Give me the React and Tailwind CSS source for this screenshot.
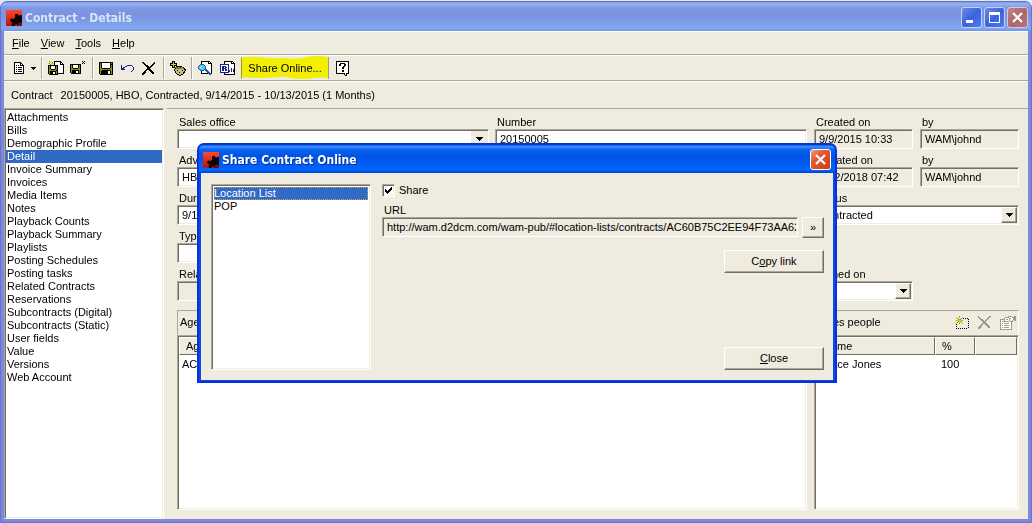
import { useState } from "react";

const sections = [
  "Attachments",
  "Bills",
  "Demographic Profile",
  "Detail",
  "Invoice Summary",
  "Invoices",
  "Media Items",
  "Notes",
  "Playback Counts",
  "Playback Summary",
  "Playlists",
  "Posting Schedules",
  "Posting tasks",
  "Related Contracts",
  "Reservations",
  "Subcontracts (Digital)",
  "Subcontracts (Static)",
  "User fields",
  "Value",
  "Versions",
  "Web Account",
];

const sunken =
  "border border-t-[#aca899] border-l-[#aca899] border-r-white border-b-white shadow-[inset_1px_1px_0_#716f64,inset_-1px_-1px_0_#f1efe2]";
const raised =
  "border border-t-white border-l-white border-r-[#716f64] border-b-[#716f64] shadow-[inset_-1px_-1px_0_#aca899]";

const palette = {
  k: "#000000",
  w: "#ffffff",
  o: "#8a8a1c",
  y: "#d8d020",
  g: "#9c9a8c",
  n: "#14208c",
  c: "#5cc8e8",
  b: "#1c5cc0",
  t: "#c8bc8c",
  s: "#6c6440",
};

// One character per pixel, "." is transparent
function PixelIcon({ rows }) {
  const width = Math.max(...rows.map((row) => row.length));
  return (
    <svg
      width={width}
      height={rows.length}
      viewBox={`0 0 ${width} ${rows.length}`}
      shapeRendering="crispEdges"
      aria-hidden="true"
    >
      {rows.map((row, y) =>
        [...row].map((ch, x) =>
          palette[ch] ? (
            <rect key={`${x}-${y}`} x={x} y={y} width="1" height="1" fill={palette[ch]} />
          ) : null
        )
      )}
    </svg>
  );
}

const icons = {
  page: [
    "kkkkkkk...",
    "kwwwwwkk..",
    "kwwwwwkwk.",
    "kwkwkwkkkk",
    "kwwwwwwwwk",
    "kwkwkkkkwk",
    "kwwwwwwwwk",
    "kwkwkkkkwk",
    "kwwwwwwwwk",
    "kwkwkkkkwk",
    "kwwwwwwwwk",
    "kkkkkkkkkk",
  ],
  caret: ["kkkkkkk", ".kkkkk.", "..kkk..", "...k..."],
  caretSmall: ["kkkkk", ".kkk.", "..k.."],
  saveNew: [
    ".o.y..kkkkkkk...",
    "..y.o.kwwwwwkk..",
    "yo.yyykwwwwwkwk.",
    "..o.y.kwwwwwkkkk",
    "kkkkkkkkkkwwwwwk",
    "kokwwwwkokwwwwwk",
    "kokwwwwkokwwwwwk",
    "kokwwwwkokwwwwwk",
    "kookkkkookwwwwwk",
    "koooooookkwwwwwk",
    "kokkkkkkokwwwwwk",
    "kokkkwwkokwwwwwk",
    "kokkkwwkokkkkkkk",
    ".kkkkkkkkk......",
  ],
  saveClose: [
    "............k.k",
    ".............k.",
    "............k.k",
    "kkkkkkkkkkk....",
    "kokwwwwwkok....",
    "kokwwwwwkok....",
    "kokwwwwwkok....",
    "kookkkkkook....",
    "koooooooook....",
    "kokkkkkkkok....",
    "kokkkkwwkok....",
    "kokkkkwwkok....",
    ".kkkkkkkkkk....",
    "...............",
  ],
  save: [
    "kkkkkkkkkkkkkk",
    "kokwwwwwwwwkok",
    "kokwwwwwwwwkkk",
    "kokwwwwwwwwkok",
    "kokwwwwwwwwkok",
    "kokwwwwwwwwkok",
    "kookkkkkkkkook",
    "kooooooooooook",
    "kookkkkkkkkook",
    "kokkkkkkkwwkok",
    "kokkkkkkkwwkok",
    "kokkkkkkkwwkok",
    ".kkkkkkkkkkkkk",
  ],
  undo: [
    "n.....nnnnn..",
    "n...nn.....n.",
    "n.nn........n",
    "nnn.........n",
    "nnnn........n",
    "...........n.",
    "..........n..",
  ],
  cross: [
    "kk..........k.",
    ".kk........kk.",
    "..kk......kk..",
    "...kkk...kk...",
    "....kkk.kk....",
    ".....kkkk.....",
    ".....kkk......",
    "....kkkkk.....",
    "...kk..kkk....",
    "..kk....kkk...",
    ".kkk.....kkk..",
    "kkk.......kk..",
    "kk............",
  ],
  addRole: [
    "..kkk...........",
    "..kyk...........",
    "kkkykkk.........",
    "kyyyyyk.........",
    "kkkykkk.........",
    "..kyk.kkkkkk....",
    "..kkkoosoosook..",
    ".....kossosotsk.",
    "....ktttttttttkk",
    "....kttkttttkttk",
    ".....kttttttttk.",
    ".....ktttktttkk.",
    "......kttttttk..",
    ".......kkttkk...",
    ".........kk.....",
  ],
  preview: [
    "...kkkkkkkkk..",
    "...kwwwwwwkwk.",
    "...kwwwwwwkkkk",
    "..bbbbwwwwwwwk",
    ".bccccbwwwwwwk",
    "bccwcccbwwwwwk",
    "bcwccccbwwwwwk",
    "bccccccbwwwwwk",
    ".bccccbbbwwwwk",
    "..bbbbwbbbwwwk",
    "...kwwwwbbbwwk",
    "...kwwwwwbbbwk",
    "...kkkkkkkbbbk",
    "...........bb.",
  ],
  report: [
    "....kkkkkkkkk...",
    "....kwwwwwwkwk..",
    "....kwwwwwwkkkk.",
    "nnnnnnnnnwwwwwk.",
    "nwwwwwwwnwwwwwk.",
    "nwnnnnwwnwwwwwk.",
    "nwnnwnnwnwwwwwk.",
    "nwnnnnwwnwwnwwk.",
    "nwnnwnnwnwwnwnk.",
    "nwnnwnnwnnwnwnk.",
    "nwwwwwwwnnwnwnk.",
    "nnnnnnnnnwwwwwk.",
    "....kwwwwwwwwwk.",
    "....kkkkkkkkkkk.",
  ],
  help: [
    "kkkkkkkkkkkkk",
    "kwwwwwwwwwwwk",
    "kwwwkkkkkwwwk",
    "kwwkkwwwkkwwk",
    "kwwkkwwwkkwwk",
    "kwwwwwwkkwwwk",
    "kwwwwwkkwwwwk",
    "kwwwwwkkwwwwk",
    "kwwwwwwwwwwwk",
    "kwwwwwkkwwwwk",
    "kwwwwwkkwwwwk",
    "kwwwwwwwwwwwk",
    "kkkkkkkkkwkkk",
    "........kwk..",
    ".........kk..",
  ],
  add: [
    "...o.........",
    "y..y..y......",
    ".o.y.o.k.k.k.",
    "..oyo.......k",
    "oyyyyyo......",
    "..oyo.......k",
    ".o.y.o.......",
    "y..o..y.....k",
    "k............",
    "............k",
    "k............",
    "............k",
    "k.k.k.k.k.k..",
  ],
  remove: [
    "g..........gg",
    "gg........gg.",
    ".gg......gg..",
    "..ggg...gg...",
    "...ggg.gg....",
    "....gggg.....",
    ".....ggg.....",
    "....ggggg....",
    "...gg..ggg...",
    "..gg....ggg..",
    ".ggg.....ggg.",
    "ggg.......gg.",
    "gg...........",
  ],
  properties: [
    "........gggg..gg",
    ".....ggggwwwgggg",
    "....gwwwwggwwggg",
    "gggggwggwgwwwggg",
    "gwwwgwwwwgwwg.gg",
    "gwgggggggwggg...",
    "gwwwwwwwwwwg....",
    "gwgwgggggwwg....",
    "gwwwwwwwwwwg....",
    "gwgwgggggwwg....",
    "gwwwwwwwwwwg....",
    "gwgwgggggwwg....",
    "gwwwwwwwwwwg....",
    "gggggggggggg....",
  ],
};

function AppLogo() {
  return (
    <svg width="16" height="16" viewBox="0 0 16 16" aria-hidden="true">
      <defs>
        <linearGradient id="logo" x1="0" y1="0" x2="0" y2="1">
          <stop offset="0" stopColor="#f84a30" />
          <stop offset="1" stopColor="#b81408" />
        </linearGradient>
      </defs>
      <rect width="16" height="16" fill="url(#logo)" />
      <path
        d="M9 4.5q1.5-1.500 3 0l.5 1L16 5v11h-4.500l-.5-2-2 .5-.5 1.500H6l-.5-2.500L7 12H5l-1-1.500L5 8.500l3 .5 1-1.500z"
        fill="#0c0404"
      />
      <path d="M12.500 12.500L16 13v3h-4.500z" fill="#7c0c08" />
    </svg>
  );
}

function Separator() {
  return <div className="h-[22px] w-[2px] border-l border-[#aca899] bg-white" />;
}

function ToolButton({ label, icon, className = "" }) {
  return (
    <button type="button" aria-label={label} className={`flex shrink-0 items-center ${className}`}>
      <PixelIcon rows={icon} />
    </button>
  );
}

function TextField({ id, label, value, readOnly, className = "" }) {
  return (
    <div className={`flex flex-col ${className}`}>
      <label htmlFor={id} className="truncate pl-[2px] leading-[14px]">
        {label}
      </label>
      <input
        id={id}
        type="text"
        defaultValue={value}
        readOnly={readOnly}
        className={`h-5 w-full px-1 outline-none ${sunken} ${readOnly ? "bg-[#efebde]" : "bg-white"}`}
      />
    </div>
  );
}

function SelectField({ id, label, value, flat, className = "" }) {
  return (
    <div className={`flex flex-col ${className}`}>
      <label htmlFor={id} className="truncate pl-[2px] leading-[14px]">
        {label}
      </label>
      <div className="relative">
        <select
          id={id}
          defaultValue={value}
          className={`block h-5 w-full appearance-none bg-white px-1 outline-none ${sunken}`}
        >
          <option value={value}>{value}</option>
        </select>
        <span
          className={`pointer-events-none absolute top-[2px] right-[2px] flex h-4 w-4 items-center justify-center bg-[#efebde] ${flat ? "" : raised}`}
        >
          <PixelIcon rows={icons.caret} />
        </span>
      </div>
    </div>
  );
}

function ListPanel({ title, tools, children }) {
  return (
    <div className="flex min-h-0 min-w-0 flex-col">
      <div className="flex h-[25px] shrink-0 items-center justify-between border border-t-[#aca899] border-r-white border-b-transparent border-l-[#aca899] pr-[2px] pl-[2px]">
        <span>{title}</span>
        {tools}
      </div>
      <div className={`min-h-0 flex-1 bg-white p-px ${sunken}`}>{children}</div>
    </div>
  );
}

const headCell =
  "h-[18px] border-t border-l border-r border-b border-t-white border-l-white border-r-[#716f64] border-b-[#716f64] bg-[#efebde] px-[6px] text-left font-normal";

function ShareDialog({ onClose }) {
  const [shared, setShared] = useState(true);
  const [selected, setSelected] = useState("Location List");

  return (
    <div
      role="dialog"
      aria-labelledby="share-title"
      className="absolute top-[143px] left-[197px] flex w-[640px] flex-col rounded-t-[7px] border-2 border-[#0831d9] bg-[#0a4ae8] px-[2px] pb-px"
    >
      <div className="-mx-[2px] flex h-[28px] items-center rounded-t-[5px] bg-[linear-gradient(180deg,#0a5ce8_0%,#3a94ff_6%,#0a62f0_16%,#0054e3_40%,#0060fb_75%,#0066ff_90%,#003fd0_100%)] pt-px pr-[4px] pl-[4px]">
        <AppLogo />
        <h2
          id="share-title"
          className="ml-[3px] flex-1 pt-[2px] font-['DejaVu_Sans_Condensed','DejaVu_Sans',sans-serif] text-[12px] font-bold text-white [text-shadow:1px_1px_0_#0a2a8c]"
        >
          Share Contract Online
        </h2>
        <button
          type="button"
          aria-label="Close dialog"
          onClick={onClose}
          className="flex h-[21px] w-[21px] items-center justify-center rounded-[3px] border border-white bg-[linear-gradient(135deg,#f0a088_0%,#e25a34_35%,#c83c14_100%)]"
        >
          <svg width="13" height="13" viewBox="0 0 13 13" aria-hidden="true">
            <path d="M2 2l9 9M11 2l-9 9" stroke="#fff" strokeWidth="2.2" />
          </svg>
        </button>
      </div>

      <div className="flex gap-[11px] bg-[#efebde] px-[10px] pt-[11px] pr-[9px] pb-[10px]">
        <ul role="listbox" aria-label="Shared items" className={`h-[186px] w-[160px] bg-white p-[2px] ${sunken}`}>
          {["Location List", "POP"].map((item) => (
            <li
              key={item}
              role="option"
              aria-selected={selected === item}
              onClick={() => setSelected(item)}
              className={`h-[13px] leading-[13px] ${
                selected === item
                  ? "bg-[#316ac5] text-white outline-1 -outline-offset-1 outline-dotted outline-[#c8a060]"
                  : ""
              }`}
            >
              {item}
            </li>
          ))}
        </ul>

        <div className="flex min-w-0 flex-1 flex-col">
          <label className="flex h-[13px] items-center gap-1">
            <span className="relative flex">
              <input
                type="checkbox"
                checked={shared}
                onChange={(e) => setShared(e.target.checked)}
                className={`h-[13px] w-[13px] appearance-none bg-white ${sunken}`}
              />
              {shared && (
                <svg
                  className="pointer-events-none absolute top-[3px] left-[3px]"
                  width="7"
                  height="7"
                  viewBox="0 0 7 7"
                  shapeRendering="crispEdges"
                  aria-hidden="true"
                >
                  <path d="M0 2h1v1h1v1h1v-1h1v-1h1v-1h1v-1h1v3h-1v1h-1v1h-1v1h-1v1h-1v-1h-1v-1h-1z" fill="#000" />
                </svg>
              )}
            </span>
            Share
          </label>
          <label htmlFor="share-url" className="mt-[6px] pl-[2px] leading-[14px]">
            URL
          </label>
          <div className="flex gap-1">
            <input
              id="share-url"
              type="text"
              readOnly
              value="http://wam.d2dcm.com/wam-pub/#location-lists/contracts/AC60B75C2EE94F73AA62"
              className={`h-5 min-w-0 flex-1 bg-[#efebde] pr-px pl-1 outline-none ${sunken}`}
            />
            <button type="button" aria-label="Open link" className={`h-[21px] w-[22px] bg-[#efebde] leading-none ${raised}`}>
              »
            </button>
          </div>
          <button type="button" className={`mt-3 h-[23px] w-[100px] self-end bg-[#efebde] ${raised}`}>
            C<u>o</u>py link
          </button>
          <button
            type="button"
            onClick={onClose}
            className={`mt-auto h-[23px] w-[100px] self-end bg-[#efebde] ${raised}`}
          >
            <u>C</u>lose
          </button>
        </div>
      </div>
    </div>
  );
}

export default function App() {
  const [section, setSection] = useState("Detail");
  const [dialogOpen, setDialogOpen] = useState(true);

  return (
    <div className="relative flex h-screen flex-col bg-[#e4e6f0] pt-px font-['Liberation_Sans',Arial,sans-serif] text-[11px] leading-[13px] text-black">
      <div className="flex min-h-0 flex-1 flex-col rounded-t-[7px] border border-[#6473cc] bg-[#7b88dc] px-[3px] pb-[3px]">
        {/* Title bar */}
        <header className="-mx-[3px] flex h-[29px] shrink-0 items-center rounded-t-[6px] bg-[linear-gradient(180deg,#7c98e4_0%,#98b4f4_7%,#7f99e4_18%,#7a93df_45%,#7e9fea_75%,#82a8f2_92%,#7390dc_100%)] pt-[2px] pr-[3px] pl-[5px]">
          <AppLogo />
          <h1 className="ml-[3px] flex-1 pt-[2px] font-['DejaVu_Sans_Condensed','DejaVu_Sans',sans-serif] text-[12px] font-bold text-[#d8e4f8]">
            Contract - Details
          </h1>
          <div className="flex gap-[2px]">
            <button
              type="button"
              aria-label="Minimize"
              className="flex h-[21px] w-[21px] rounded-[3px] border border-[#c4d2f4] bg-[linear-gradient(135deg,#6c8ce8,#3c62dc_50%,#4c7cf4)]"
            >
              <svg width="19" height="19" viewBox="0 0 19 19" aria-hidden="true">
                <path d="M4 12h7v3H4z" fill="#fff" />
              </svg>
            </button>
            <button
              type="button"
              aria-label="Maximize"
              className="flex h-[21px] w-[21px] rounded-[3px] border border-[#c4d2f4] bg-[linear-gradient(135deg,#6c8ce8,#3c62dc_50%,#4c7cf4)]"
            >
              <svg width="19" height="19" viewBox="0 0 19 19" aria-hidden="true">
                <path d="M4 4h11v11H4zM5 7v7h9V7z" fill="#fff" fillRule="evenodd" />
              </svg>
            </button>
            <button
              type="button"
              aria-label="Close"
              className="flex h-[21px] w-[21px] rounded-[3px] border border-[#d4c8dc] bg-[linear-gradient(135deg,#c08890,#b0646c_50%,#b87078)]"
            >
              <svg width="19" height="19" viewBox="0 0 19 19" aria-hidden="true">
                <path d="M5 5l9 9M14 5l-9 9" stroke="#fff" strokeWidth="2.2" />
              </svg>
            </button>
          </div>
        </header>

        <div className="flex min-h-0 flex-1 flex-col bg-[#efebde]">
          {/* Menu */}
          <nav className="flex h-6 shrink-0 items-center gap-[11px] border-t border-b border-t-white border-b-[#aca899] px-2 pt-px">
            <button type="button"><u>F</u>ile</button>
            <button type="button"><u>V</u>iew</button>
            <button type="button"><u>T</u>ools</button>
            <button type="button"><u>H</u>elp</button>
          </nav>

          {/* Toolbar */}
          <div className="flex h-[26px] shrink-0 items-center border-t border-b border-t-white border-b-[#aca899] pl-[10px]">
            <ToolButton label="New" icon={icons.page} />
            <ToolButton label="New options" icon={icons.caretSmall} className="mr-[5px] ml-[7px]" />
            <Separator />
            <ToolButton label="Save and new" icon={icons.saveNew} className="mr-[6px] ml-[5px]" />
            <ToolButton label="Save and close" icon={icons.saveClose} className="mr-[7px]" />
            <Separator />
            <ToolButton label="Save" icon={icons.save} className="mr-[8px] ml-[5px]" />
            <ToolButton label="Undo" icon={icons.undo} className="mr-[8px]" />
            <ToolButton label="Delete" icon={icons.cross} className="mr-[7px]" />
            <Separator />
            <ToolButton label="Add booking" icon={icons.addRole} className="mr-[5px] ml-[5px]" />
            <Separator />
            <ToolButton label="Preview" icon={icons.preview} className="mr-[8px] ml-[5px]" />
            <ToolButton label="Report" icon={icons.report} className="mr-[5px]" />
            <div className="relative flex h-6 items-center">
              {/* Marker stroke behind the share button */}
              <svg
                className="absolute inset-0 h-full w-full"
                viewBox="0 0 88 24"
                preserveAspectRatio="none"
                aria-hidden="true"
              >
                <path
                  d="M0 2Q8 0 18 1Q30 3 44 2Q56 4 66 1Q76-1 87 1V22Q80 21 74 22Q62 24 50 22Q44 20 36 21Q18 23 0 21z"
                  fill="#f2ee04"
                />
              </svg>
              <div className="relative flex items-center mix-blend-multiply">
                <div className="h-[22px] w-px bg-[#aca899]" />
                <button
                  type="button"
                  onClick={() => setDialogOpen(true)}
                  className="h-[22px] w-[86px] text-center"
                >
                  Share Online...
                </button>
                <div className="h-[22px] w-px bg-[#aca899]" />
              </div>
            </div>
            <ToolButton label="Help" icon={icons.help} className="ml-[7px]" />
          </div>

          <div className="flex h-[27px] shrink-0 items-center gap-2 border-t border-t-white px-[7px]">
            <span>Contract</span>
            <span>20150005, HBO, Contracted, 9/14/2015 - 10/13/2015 (1 Months)</span>
          </div>

          {/* Body */}
          <div className="flex min-h-0 flex-1 gap-[3px]">
            <ul
              role="listbox"
              aria-label="Sections"
              className={`w-[160px] shrink-0 overflow-hidden bg-white px-px py-[2px] ${sunken}`}
            >
              {sections.map((name) => (
                <li
                  key={name}
                  role="option"
                  aria-selected={section === name}
                  onClick={() => setSection(name)}
                  className={`h-[13px] px-px leading-[13px] ${section === name ? "bg-[#316ac5] text-white" : ""}`}
                >
                  {name}
                </li>
              ))}
            </ul>

            <main className="grid min-w-0 flex-1 grid-cols-[minmax(0,1fr)_205px] grid-rows-[auto_minmax(0,1fr)] gap-x-[7px] gap-y-[9px] border-t border-[#aca899] pt-[6px] pr-[9px] pb-[9px] pl-[10px]">
              <div className="grid grid-cols-2 content-start gap-x-[6px] gap-y-[4px]">
                <SelectField id="office" label="Sales office" value="" flat />
                <TextField id="number" label="Number" value="20150005" />
                <TextField id="advertiser" label="Advertiser" value="HBO" className="col-span-2" />
                <TextField id="duration" label="Duration" value="9/14/2015" className="col-span-2" />
                <TextField id="type" label="Type" value="" className="col-span-2" />
                <TextField id="related" label="Related" value="" readOnly className="col-span-2" />
              </div>
              <div className="grid grid-cols-2 content-start gap-x-[7px] gap-y-[4px]">
                <TextField id="created" label="Created on" value="9/9/2015 10:33" readOnly />
                <TextField id="created-by" label="by" value="WAM\johnd" readOnly />
                <TextField id="updated" label="Updated on" value="2/12/2018 07:42" readOnly />
                <TextField id="updated-by" label="by" value="WAM\johnd" readOnly />
                <SelectField id="status" label="Status" value="Contracted" className="col-span-2" />
                <div className="col-span-2 h-[34px]" />
                <SelectField id="signed" label="Signed on" value="" />
              </div>

              <ListPanel title="Agencies">
                <table className="w-full border-separate border-spacing-0">
                  <thead>
                    <tr>
                      <th className={headCell}>Agency</th>
                    </tr>
                  </thead>
                  <tbody>
                    <tr>
                      <td className="h-[18px] px-[3px]">ACME</td>
                    </tr>
                  </tbody>
                </table>
              </ListPanel>
              <ListPanel
                title="Sales people"
                tools={
                  <div className="flex items-center gap-[9px]">
                    <ToolButton label="Add person" icon={icons.add} />
                    <ToolButton label="Remove person" icon={icons.remove} />
                    <ToolButton label="Person properties" icon={icons.properties} />
                  </div>
                }
              >
                <table className="w-full table-fixed border-separate border-spacing-0">
                  <thead>
                    <tr>
                      <th className={headCell}>Name</th>
                      <th className={`w-10 ${headCell}`}>%</th>
                      <th className={`w-[42px] ${headCell}`} aria-label="Notes" />
                    </tr>
                  </thead>
                  <tbody>
                    <tr>
                      <td className="h-[18px] px-[3px]">Grace Jones</td>
                      <td className="px-[6px]">100</td>
                      <td />
                    </tr>
                  </tbody>
                </table>
              </ListPanel>
            </main>
          </div>
        </div>
      </div>

      {dialogOpen && <ShareDialog onClose={() => setDialogOpen(false)} />}
    </div>
  );
}
